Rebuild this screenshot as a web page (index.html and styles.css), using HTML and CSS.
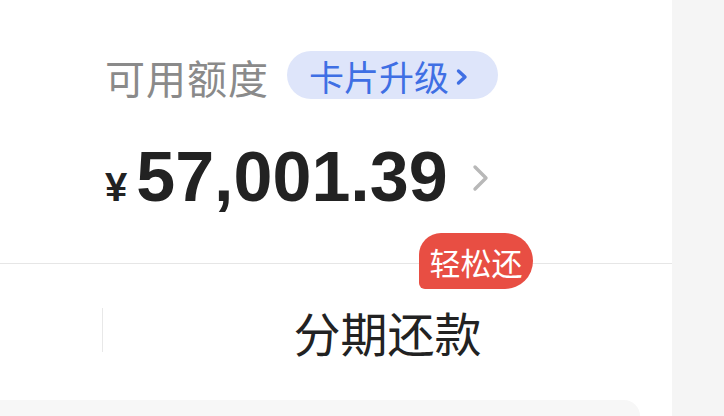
FILE: index.html
```html
<!DOCTYPE html>
<html lang="zh-CN">
<head>
<meta charset="UTF-8">
<title>额度</title>
<link rel="stylesheet" href="styles.css">
</head>
<body>
<div class="page">
	<div class="main">
		<div class="quota">
			<div class="limit-row">
				<span class="label">可用额度</span>
				<a class="upgrade" href="#">卡片升级
					<svg class="upgrade-arrow" viewBox="0 0 14 18" width="14" height="18"><path d="M3.5 3 L10 9 L3.5 15" fill="none" stroke="#3f6fe4" stroke-width="3.4" stroke-linecap="round" stroke-linejoin="round"/></svg>
				</a>
			</div>
			<div class="amount-row">
				<span class="yen">¥</span>
				<span class="amount">57,001.39</span>
				<svg class="amount-arrow" viewBox="0 0 22 28" width="22" height="28"><path d="M5 3 L16 14 L5 25" fill="none" stroke="#b8b8b8" stroke-width="3.4" stroke-linecap="round" stroke-linejoin="round"/></svg>
			</div>
		</div>

		<div class="actions">
			<div class="action-left"></div>
			<div class="sep"></div>
			<div class="action-item">分期还款</div>
			<span class="badge">轻松还</span>
		</div>

		<div class="bottom-card"></div>
	</div>
	<div class="side"></div>
</div>
</body>
</html>
```

FILE: styles.css
```css
html, body {
	margin: 0;
	padding: 0;
	background: #ffffff;
}
body {
	width: 724px;
	height: 416px;
	overflow: hidden;
	font-family: "Noto Sans CJK SC", "Liberation Sans", sans-serif;
}
.page {
	display: flex;
	height: 416px;
	overflow: hidden;
}
.main {
	width: 672px;
	background: #ffffff;
}
.side {
	flex: 1;
	background: #f5f5f5;
}

/* 额度区域 */
.quota {
	height: 263px;
	box-sizing: border-box;
	padding: 51px 0 0 105px;
}
.limit-row {
	display: flex;
	align-items: flex-start;
	gap: 18px;
}
.label {
	font-size: 40px;
	line-height: 48px;
	color: #8a8a8a;
	margin-top: 2px;
	letter-spacing: 1px;
}
.upgrade {
	display: flex;
	align-items: center;
	gap: 6px;
	height: 48px;
	padding: 0 29px 0 22px;
	border-radius: 24px;
	background: #dee5fa;
	color: #3f6fe4;
	font-size: 35px;
	text-decoration: none;
}
.upgrade-arrow {
	margin-top: 3px;
}
.amount-row {
	display: flex;
	align-items: baseline;
	margin-top: 41px;
	font-family: "Liberation Sans", sans-serif;
	font-weight: bold;
	color: #222222;
}
.yen {
	font-size: 40px;
	margin-right: 9px;
}
.amount {
	font-size: 70px;
	line-height: 70px;
}
.amount-arrow {
	align-self: center;
	margin-left: 22px;
	margin-top: 2px;
}

/* 操作栏 */
.actions {
	position: relative;
	display: grid;
	grid-template-columns: 102px 1px 1fr;
	align-items: center;
	height: 137px;
	box-sizing: border-box;
	border-top: 1px solid #e6e6e6;
}
.sep {
	height: 44px;
	margin-top: -4px;
	background: #e8e8e8;
}
.action-item {
	text-align: center;
	font-size: 47px;
	color: #222222;
	margin-top: -2px;
}
.badge {
	position: absolute;
	left: 419px;
	top: -31px;
	width: 114px;
	height: 56px;
	display: flex;
	align-items: center;
	justify-content: center;
	background: #e84e43;
	color: #ffffff;
	font-size: 31px;
	border-radius: 22px 28px 28px 6px;
}

.bottom-card {
	width: 640px;
	height: 16px;
	background: #f7f7f7;
	border-top-right-radius: 22px;
}
```
